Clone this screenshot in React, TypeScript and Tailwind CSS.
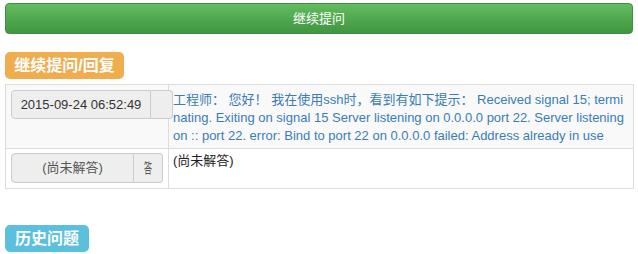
import React from "react";

export default function App() {
  return (
    <div className="w-[638px] h-[254px] overflow-hidden bg-white px-[5px] pt-[3px] font-['Liberation_Sans','Noto_Sans_CJK_SC',sans-serif] text-[13px] text-[#333]">
      <button className="flex h-[31px] w-[628px] items-center justify-center rounded-[4px] border border-[#3e8f3e] bg-gradient-to-b from-[#62bd5e] to-[#3f963f] text-[13px] text-white">
        继续提问
      </button>

      <div className="mt-[18px] flex h-[27px] w-[119px] items-center justify-center rounded-[5px] bg-[#f0ad4e] text-[16px] font-bold leading-none text-white">
        继续提问/回复
      </div>

      <div className="mt-[5px] w-[629px] border border-[#ddd]">
        <div className="grid grid-cols-[163px_1fr] bg-[#f9f9f9]">
          <div className="h-[63px] border-r border-[#ddd] pl-[5px] pt-[5px]">
            <div className="relative z-0 flex h-[29px] w-[162px]">
              <div className="flex w-[140px] items-center justify-center rounded-l-[4px] border border-[#ccc] bg-[#eee] text-[13px] text-[#333]">
                2015-09-24 06:52:49
              </div>
              <div className="w-[22px] rounded-r-[4px] border border-l-0 border-[#ccc] bg-[#eee]" />
            </div>
          </div>
          <div className="relative z-10 pl-[4px] pr-[5px] pt-[6px] text-[13px] leading-[18px] text-[#3a7cb8] break-all">
            工程师： 您好！ 我在使用ssh时，看到有如下提示： Received signal 15; terminating. Exiting on signal 15 Server listening on 0.0.0.0 port 22. Server listening on :: port 22. error: Bind to port 22 on 0.0.0.0 failed: Address already in use
          </div>
        </div>
        <div className="grid grid-cols-[163px_1fr] border-t border-[#ddd] bg-white">
          <div className="h-[39px] border-r border-[#ddd] pl-[5px] pt-[4px]">
            <div className="flex h-[30px] w-[152px]">
              <div className="flex w-[123px] items-center justify-center rounded-l-[4px] border border-[#ccc] bg-[#eee] text-[13px] text-[#555]">
                (尚未解答)
              </div>
              <div className="flex w-[29px] items-center justify-center overflow-hidden rounded-r-[4px] border border-l-0 border-[#ccc] bg-[#eee] text-[14px] text-[#555]">
                <span className="inline-block scale-x-[0.6]">答</span>
              </div>
            </div>
          </div>
          <div className="pl-[4px] pt-[3px] text-[13px] leading-[18px] text-[#222]">(尚未解答)</div>
        </div>
      </div>

      <div className="mt-[36px] flex h-[27px] w-[84px] items-center justify-center rounded-[5px] bg-[#5bc0de] text-[16px] font-bold leading-none text-white">
        历史问题
      </div>
    </div>
  );
}
